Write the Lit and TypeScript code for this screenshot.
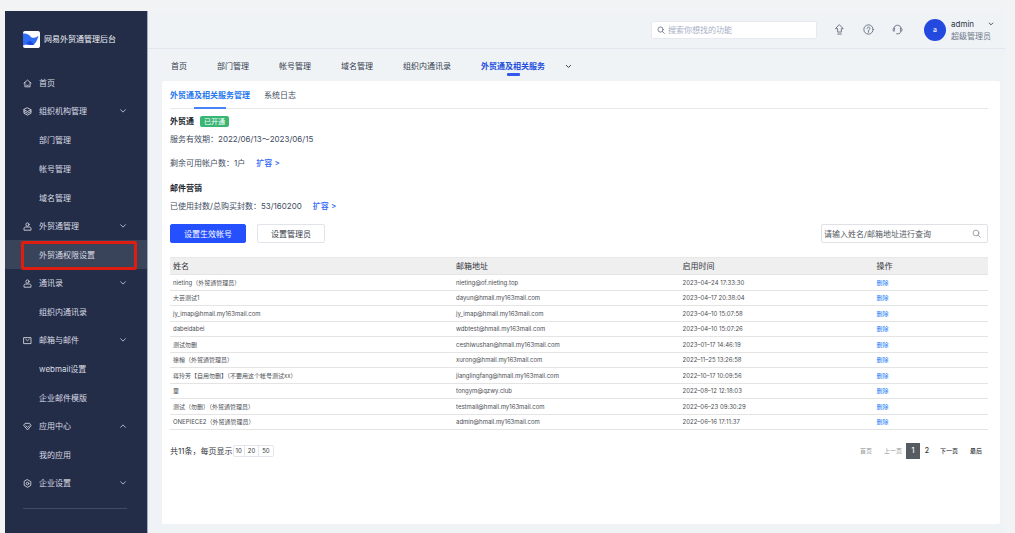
import { LitElement, html, css, svg, nothing } from "lit";
import { customElement } from "lit/decorators.js";
import { classMap } from "lit/directives/class-map.js";

type NavGroup = { icon: string; label: string; open?: boolean; items?: string[] };

const glyphs: Record<string, unknown> = {
  home: svg`<path d="M2 8.2 9 2.2l7 6M3.8 7v8.6h10.4V7M6.6 12c1.2 1.5 3.6 1.5 4.8 0"/>`,
  layers: svg`<path d="M9 1.8 16 5.4 9 9 2 5.4ZM2 5.4v7.2L9 16.2l7-3.6V5.4M2 9l7 3.6L16 9"/>`,
  user: svg`<circle cx="9" cy="5" r="3.2"/><path d="M2 15.6V13c0-1.8 1.2-3 3-3h8c1.8 0 3 1.2 3 3v2.6Z"/>`,
  mail: svg`<path d="M2 3.2h14v12H2ZM5.4 6.4 9 9.600l3.600-3.200"/>`,
  gem: svg`<path d="M5 2.600h8l3.200 4.600L9 15.800 1.800 7.200ZM5.600 7.400 9 10.800l3.400-3.400"/>`,
  gear: svg`<path d="M9 1.400 15.600 5.200v7.600L9 16.600 2.400 12.800V5.200Z"/><circle cx="9" cy="9" r="2.600"/>`,
  down: svg`<path d="m3.500 6 5.500 5.500L14.500 6"/>`,
  up: svg`<path d="m3.500 12 5.500-5.500 5.500 5.500"/>`,
  search: svg`<circle cx="8" cy="8" r="5.800"/><path d="m12.200 12.200 4.300 4.300"/>`,
  upload: svg`<path d="M9 1.400 15 7.600h-3v5.600H6V7.600H3ZM6 16.400h6"/>`,
  help: svg`<circle cx="9" cy="9" r="7.600"/><path d="M6.600 7.200C6.600 4.200 11.400 4.200 11.400 7.200c0 1.800-2.400 1.800-2.400 3.600M9 12.200v1.400"/>`,
  headset: svg`<path d="M3 7.400C3.400 0 14.600 0 15 7.400M3.800 7v4.800C.6 12 .6 7 3.800 7ZM14.200 7v4.800c3.200.2 3.200-4.800 0-4.800ZM14.600 12c-.6 2.800-2.200 4-4.600 4H7.600"/>`,
};

const icon = (name: string) => html`
  <svg class="icon icon-${name}" viewBox="0 0 18 18" aria-hidden="true">${glyphs[name]}</svg>
`;

const nav: NavGroup[] = [
  { icon: "home", label: "首页" },
  { icon: "layers", label: "组织机构管理", items: ["部门管理", "帐号管理", "域名管理"] },
  { icon: "user", label: "外贸通管理", items: ["外贸通权限设置"] },
  { icon: "user", label: "通讯录", items: ["组织内通讯录"] },
  { icon: "mail", label: "邮箱与邮件", items: ["webmail设置", "企业邮件模版"] },
  { icon: "gem", label: "应用中心", open: true, items: ["我的应用"] },
  { icon: "gear", label: "企业设置", items: [] },
];

const tabs = ["首页", "部门管理", "帐号管理", "域名管理", "组织内通讯录", "外贸通及相关服务"];

const rows: [string, string, string][] = [
  ["nieting（外贸通管理员）", "nieting@of.nieting.top", "2023–04–24 17:33:30"],
  ["大芸测试1", "dayun@hmail.my163mail.com", "2023–04–17 20:38:04"],
  ["jy_imap@hmail.my163mail.com", "jy_imap@hmail.my163mail.com", "2023–04–10 15:07:58"],
  ["dabeidabei", "wdbtest@hmail.my163mail.com", "2023–04–10 15:07:26"],
  ["测试勿删", "ceshiwushan@hmail.my163mail.com", "2023–01–17 14:46:19"],
  ["徐榕（外贸通管理员）", "xurong@hmail.my163mail.com", "2022–11–25 13:26:58"],
  ["蒋玲芳【自用勿删】（不要用这个帐号测试xx）", "jianglingfang@hmail.my163mail.com", "2022–10–17 10:09:56"],
  ["童", "tongym@qzwy.club", "2022–08–12 12:18:03"],
  ["测试（勿删）（外贸通管理员）", "testmail@hmail.my163mail.com", "2022–06–23 09:30:29"],
  ["ONEPIECE2（外贸通管理员）", "admin@hmail.my163mail.com", "2022–06–16 17:11:37"],
];

const shared = css`
  * {
    box-sizing: border-box;
  }
  a {
    color: inherit;
    text-decoration: none;
  }
  button,
  input {
    font: inherit;
    color: inherit;
    margin: 0;
    padding: 0;
    border: 0;
    background: none;
  }
  button {
    cursor: pointer;
  }
  .icon {
    flex: none;
    width: 9px;
    height: 9px;
    fill: none;
    stroke: currentColor;
    stroke-width: 1.7;
    stroke-linecap: round;
    stroke-linejoin: round;
  }
`;

@customElement("side-nav")
class SideNav extends LitElement {
  static styles = [
    shared,
    css`
      :host {
        display: block;
        flex: none;
        width: 143px;
        background: #242d48;
        border-right: 1px solid #a3abbd;
        color: #d9dce4;
      }
      .brand {
        display: flex;
        align-items: center;
        gap: 4px;
        height: 58px;
        padding: 0 0 2px 18px;
        color: #f2f4f8;
      }
      .logo {
        flex: none;
        width: 17px;
        height: 17px;
      }
      ul {
        list-style: none;
        margin: 0;
        padding: 0;
      }
      .group {
        display: flex;
        align-items: center;
        gap: 7px;
        width: 100%;
        height: 28px;
        padding: 0 20px 0 18px;
        text-align: left;
      }
      .label {
        flex: 1;
      }
      .icon-down,
      .icon-up {
        width: 8px;
        height: 8px;
      }
      .item {
        position: relative;
        display: flex;
        align-items: center;
        height: 29px;
        padding-left: 34px;
      }
      .current {
        background: #39445b;
      }
      .mark {
        position: absolute;
        inset: 1px 10px -1px 16px;
        border: 3px solid #de1c10;
        border-radius: 2px;
      }
      .rule {
        height: 1px;
        margin: 11px 20px 0 18px;
        background: #3f4b66;
      }
    `,
  ];

  render() {
    return html`
      <div class="brand">
        <svg class="logo" viewBox="0 0 34 34" aria-hidden="true">
          <rect width="34" height="34" rx="4" fill="#fff" />
          <path d="M0 5c7-1 12 2 16 7 3 3 8 2 15-2-3 9-6 18-14 18-6 0-10-3-17 1Z" fill="#2f6cf5" />
          <path d="M0 29c8-1 8-8 14-9 4 0 5 7 9 6-2 2-4 2-6 2-6 0-10-3-17 1Z" fill="#1848dc" />
        </svg>
        <span>网易外贸通管理后台</span>
      </div>
      <nav>
        <ul>
          ${nav.map(
            (g) => html`
              <li>
                <button class="group">
                  ${icon(g.icon)}<span class="label">${g.label}</span>
                  ${g.items ? icon(g.open ? "up" : "down") : nothing}
                </button>
                ${g.items?.length
                  ? html`<ul>
                      ${g.items.map((item) => {
                        const current = item === "外贸通权限设置";
                        return html`<li>
                          <a class=${classMap({ item: true, current })} href="#"
                            >${item}${current ? html`<span class="mark"></span>` : nothing}</a
                          >
                        </li>`;
                      })}
                    </ul>`
                  : nothing}
              </li>
            `
          )}
        </ul>
      </nav>
      <div class="rule"></div>
    `;
  }
}

@customElement("top-bar")
class TopBar extends LitElement {
  static styles = [
    shared,
    css`
      :host {
        display: flex;
        align-items: center;
        justify-content: flex-end;
        height: 38px;
        padding-right: 11px;
        border-bottom: 1px solid #e1e6ef;
        color: #6f7789;
      }
      .search {
        display: flex;
        align-items: center;
        gap: 3px;
        width: 166px;
        height: 18px;
        padding: 0 5px;
        margin-right: 17px;
        background: #fff;
        border: 1px solid #e6e9ef;
        border-radius: 2px;
      }
      .search .icon {
        width: 8px;
        height: 8px;
        stroke-width: 2;
      }
      .search input {
        flex: 1;
        min-width: 0;
        outline: 0;
      }
      .search input::placeholder {
        color: #a6aec6;
        opacity: 1;
      }
      .tool {
        display: flex;
        margin-right: 18px;
      }
      .tool .icon {
        width: 11px;
        height: 11px;
        stroke-width: 1.6;
      }
      .avatar {
        display: grid;
        place-items: center;
        width: 22px;
        height: 22px;
        margin: 0 5px 0 3px;
        border-radius: 50%;
        background: #2449de;
        color: #fff;
        font-size: 7px;
      }
      .who {
        display: grid;
        grid-template-columns: 1fr auto;
        width: 43px;
        line-height: 12px;
        text-align: left;
      }
      .name {
        color: #2e3548;
      }
      .role {
        grid-column: 1 / -1;
      }
      .who .icon {
        width: 6px;
        height: 6px;
        align-self: center;
        stroke-width: 2.5;
        color: #2e3548;
      }
    `,
  ];

  render() {
    return html`
      <label class="search">
        ${icon("search")}
        <input type="text" aria-label="搜索" placeholder="搜索你想找的功能" />
      </label>
      <button class="tool" aria-label="升级">${icon("upload")}</button>
      <button class="tool" aria-label="帮助">${icon("help")}</button>
      <button class="tool" aria-label="客服">${icon("headset")}</button>
      <span class="avatar">a</span>
      <button class="who">
        <span class="name">admin</span>${icon("down")}
        <span class="role">超级管理员</span>
      </button>
    `;
  }
}

@customElement("service-panel")
class ServicePanel extends LitElement {
  static styles = [
    shared,
    css`
      :host {
        display: block;
        flex: 1;
        margin: 0 5px 9px 14px;
        padding: 0 12px 0 8px;
        background: #fff;
        border-radius: 2px;
        color: #424c61;
      }
      .subtabs {
        display: flex;
        gap: 14px;
        height: 28px;
        border-bottom: 1px solid #e6e8ec;
      }
      .subtab {
        position: relative;
        display: flex;
        align-items: center;
      }
      .subtab.on {
        color: #2878f0;
        font-weight: 700;
      }
      .subtab.on::after {
        content: "";
        position: absolute;
        left: 30%;
        bottom: -1px;
        width: 40%;
        height: 2px;
        background: #4785f7;
      }
      h2 {
        margin: 0;
        font-size: 8px;
        font-weight: 700;
        line-height: 12px;
        color: #22262e;
      }
      .title {
        display: flex;
        align-items: center;
        gap: 6px;
        margin-top: 6px;
      }
      .badge {
        padding: 0 4px;
        height: 11px;
        line-height: 11px;
        font-size: 7px;
        border-radius: 2px;
        background: #39b574;
        color: #fff;
      }
      p {
        display: flex;
        gap: 11px;
        margin: 6px 0 0;
        line-height: 12px;
      }
      .room {
        margin: 12px 0 13px;
      }
      .more {
        color: #2f66f6;
        font-weight: 500;
      }
      .actions {
        display: flex;
        gap: 11px;
        margin-top: 12px;
        height: 19px;
      }
      .action {
        padding: 0 13px;
        border: 1px solid #e1e4ea;
        border-radius: 2px;
        color: #333a48;
      }
      .primary {
        background: #2450ff;
        border-color: #2450ff;
        color: #fff;
      }
      .query {
        display: flex;
        align-items: center;
        width: 167px;
        margin-left: auto;
        padding: 0 6px 0 2px;
        border: 1px solid #dfe1e5;
        border-radius: 2px;
      }
      .query input {
        flex: 1;
        min-width: 0;
        outline: 0;
      }
      .query input::placeholder {
        color: #555a64;
        opacity: 1;
      }
      .query .icon {
        stroke-width: 1.6;
        color: #8b8f97;
      }
      table {
        width: 100%;
        margin-top: 14px;
        border-collapse: separate;
        border-spacing: 0;
        table-layout: fixed;
        text-align: left;
        color: #4b4e54;
        font-size: 6px;
      }
      th,
      td {
        padding: 0 3px;
        border-bottom: 1px solid #e4e4e5;
        white-space: nowrap;
      }
      th {
        height: 18px;
        font-size: 8px;
        font-weight: 400;
        background: #efefef;
        border-top: 1px solid #e8e8e8;
        color: #33363b;
      }
      td {
        height: 16px;
      }
      tr:nth-child(even) td {
        height: 15px;
      }
      .c1 {
        width: 34.6%;
      }
      .c2 {
        width: 27.7%;
      }
      .c3 {
        width: 23.7%;
      }
      .delete {
        color: #1f7cf5;
      }
      .foot {
        display: flex;
        align-items: center;
        justify-content: space-between;
        margin-top: 13px;
        color: #33363b;
      }
      .count,
      .sizes,
      .pager {
        display: flex;
        align-items: center;
      }
      .sizes {
        border: 1px solid #e3e5ee;
        border-radius: 2px;
        font-size: 6px;
        line-height: 10px;
      }
      .sizes button {
        padding: 0 2px;
      }
      .sizes button + button {
        padding: 0 3px;
        border-left: 1px solid #e3e5ee;
      }
      .pager {
        gap: 12px;
        padding-right: 6px;
        font-size: 6px;
        font-weight: 500;
      }
      .pages {
        display: flex;
        margin: 0 -6px 0 -8px;
      }
      .page {
        width: 14px;
        height: 16px;
        font-size: 7px;
      }
      .page.on {
        background: #565b61;
        color: #fff;
      }
      .off {
        color: #96989c;
        font-weight: 400;
      }
    `,
  ];

  render() {
    return html`
      <nav class="subtabs">
        <a class="subtab on" href="#">外贸通及相关服务管理</a>
        <a class="subtab" href="#">系统日志</a>
      </nav>
      <div class="title">
        <h2>外贸通</h2>
        <span class="badge">已开通</span>
      </div>
      <p>服务有效期：2022/06/13～2023/06/15</p>
      <p class="room"><span>剩余可用帐户数：1户</span><a class="more" href="#">扩容 &gt;</a></p>
      <h2>邮件营销</h2>
      <p><span>已使用封数/总购买封数：53/160200</span><a class="more" href="#">扩容 &gt;</a></p>
      <div class="actions">
        <button class="action primary">设置生效帐号</button>
        <button class="action">设置管理员</button>
        <label class="query">
          <input type="text" aria-label="查询" placeholder="请输入姓名/邮箱地址进行查询" />
          ${icon("search")}
        </label>
      </div>
      <table>
        <thead>
          <tr>
            <th class="c1">姓名</th>
            <th class="c2">邮箱地址</th>
            <th class="c3">启用时间</th>
            <th>操作</th>
          </tr>
        </thead>
        <tbody>
          ${rows.map(
            ([name, mail, time]) => html`
              <tr>
                <td>${name}</td>
                <td>${mail}</td>
                <td>${time}</td>
                <td><a class="delete" href="#">删除</a></td>
              </tr>
            `
          )}
        </tbody>
      </table>
      <div class="foot">
        <div class="count">
          <span>共11条，每页显示</span>
          <div class="sizes">${[10, 20, 50].map((n) => html`<button>${n}</button>`)}</div>
        </div>
        <nav class="pager">
          <a class="off">首页</a>
          <a class="off">上一页</a>
          <span class="pages">
            <button class="page on">1</button>
            <button class="page">2</button>
          </span>
          <a href="#">下一页</a>
          <a href="#">最后</a>
        </nav>
      </div>
    `;
  }
}

@customElement("app-root")
class AppRoot extends LitElement {
  static styles = [
    shared,
    css`
      :host {
        display: flex;
        box-sizing: border-box;
        min-height: 100vh;
        padding: 11px 10px 0 5px;
        background: #f1f3f4;
        font: 8px/12px Inter, "Noto Sans CJK SC", sans-serif;
      }
      main {
        flex: 1;
        min-width: 0;
        display: flex;
        flex-direction: column;
        background: #eff3f5;
      }
      .tabs {
        display: flex;
        align-items: center;
        gap: 30px;
        height: 32px;
        padding: 2px 0 0 23px;
        color: #343b4f;
      }
      .tabs .icon {
        width: 7px;
        height: 7px;
        margin-left: -10px;
        stroke-width: 2.5;
      }
      .tab {
        position: relative;
      }
      .tab.on {
        color: #2450e0;
        font-weight: 700;
      }
      .tab.on::after {
        content: "";
        position: absolute;
        left: 40%;
        bottom: -4px;
        width: 13px;
        height: 3px;
        border-radius: 1px;
        background: #3157ef;
      }
    `,
  ];

  render() {
    return html`
      <side-nav></side-nav>
      <main>
        <top-bar></top-bar>
        <nav class="tabs">
          ${tabs.map(
            (t, i) => html`<a class=${classMap({ tab: true, on: i === tabs.length - 1 })} href="#">${t}</a>`
          )}
          ${icon("down")}
        </nav>
        <service-panel></service-panel>
      </main>
    `;
  }
}
